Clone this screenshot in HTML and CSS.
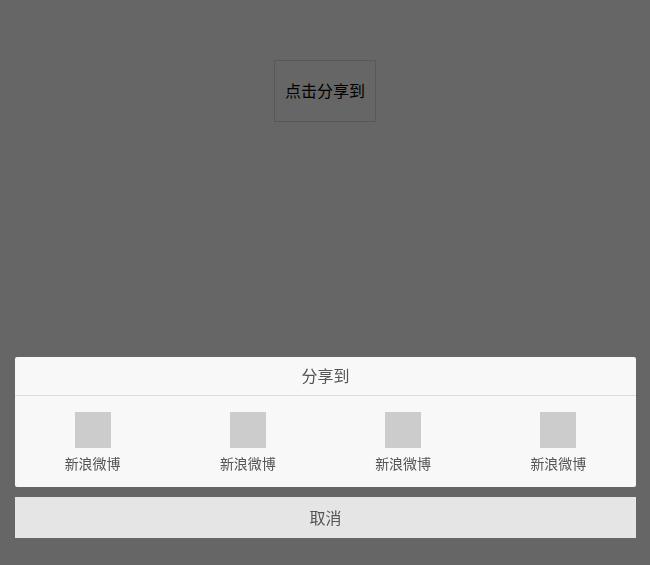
FILE: index.html
```html
<!DOCTYPE html>
<html lang="zh-CN">
<head>
  <meta charset="UTF-8">
  <meta name="viewport" content="width=device-width, initial-scale=1.0">
  <title>分享到</title>
  <link rel="stylesheet" href="styles.css">
</head>
<body>
  <button type="button" class="share-btn">点击分享到</button>

  <!-- 遮罩层 -->
  <div class="mask"></div>

  <!-- 分享面板 -->
  <div class="share-sheet">
    <div class="share-box">
      <h2 class="share-title">分享到</h2>
      <ul class="share-list">
        <li><a href="#"><i class="share-icon"></i><span>新浪微博</span></a></li>
        <li><a href="#"><i class="share-icon"></i><span>新浪微博</span></a></li>
        <li><a href="#"><i class="share-icon"></i><span>新浪微博</span></a></li>
        <li><a href="#"><i class="share-icon"></i><span>新浪微博</span></a></li>
      </ul>
    </div>
    <button type="button" class="cancel-btn">取消</button>
  </div>
</body>
</html>
```

FILE: styles.css
```css
* { box-sizing: border-box; margin: 0; padding: 0; }
body { background: #fff; color: #000; font-family: "Liberation Sans", "Noto Sans CJK SC", sans-serif; font-size: 16px; }
button { font-family: inherit; font-size: 16px; cursor: pointer; }
.share-btn { display: block; margin: 60px auto 0; padding: 2px 10px 0; line-height: 58px; background: #fff; color: #000; border: 1px solid #ddd; }
.mask { position: fixed; top: 0; left: 0; width: 100%; height: 100%; background: rgba(0, 0, 0, 0.6); }
.share-sheet { position: fixed; left: 0; bottom: 0; width: 100%; padding: 0 14px 27px 15px; }
.share-box { background: #f8f8f8; border-radius: 2px; margin-bottom: 10px; }
.share-title { padding-top: 2px; line-height: 36px; font-size: 16px; font-weight: normal; color: #555; text-align: center; border-bottom: 1px solid #ddd; }
.share-list { display: flex; list-style: none; padding: 16px 0 13px; }
.share-list li { flex: 1; text-align: center; }
.share-list a { display: block; color: #555; font-size: 14px; line-height: 20px; text-decoration: none; }
.share-icon { display: block; width: 36px; height: 36px; margin: 0 auto 6px; background: #ccc; }
.share-list span { display: block; }
.cancel-btn { display: block; width: 100%; padding-top: 2px; line-height: 39px; border: none; background: #e5e5e5; color: #555; }
```
